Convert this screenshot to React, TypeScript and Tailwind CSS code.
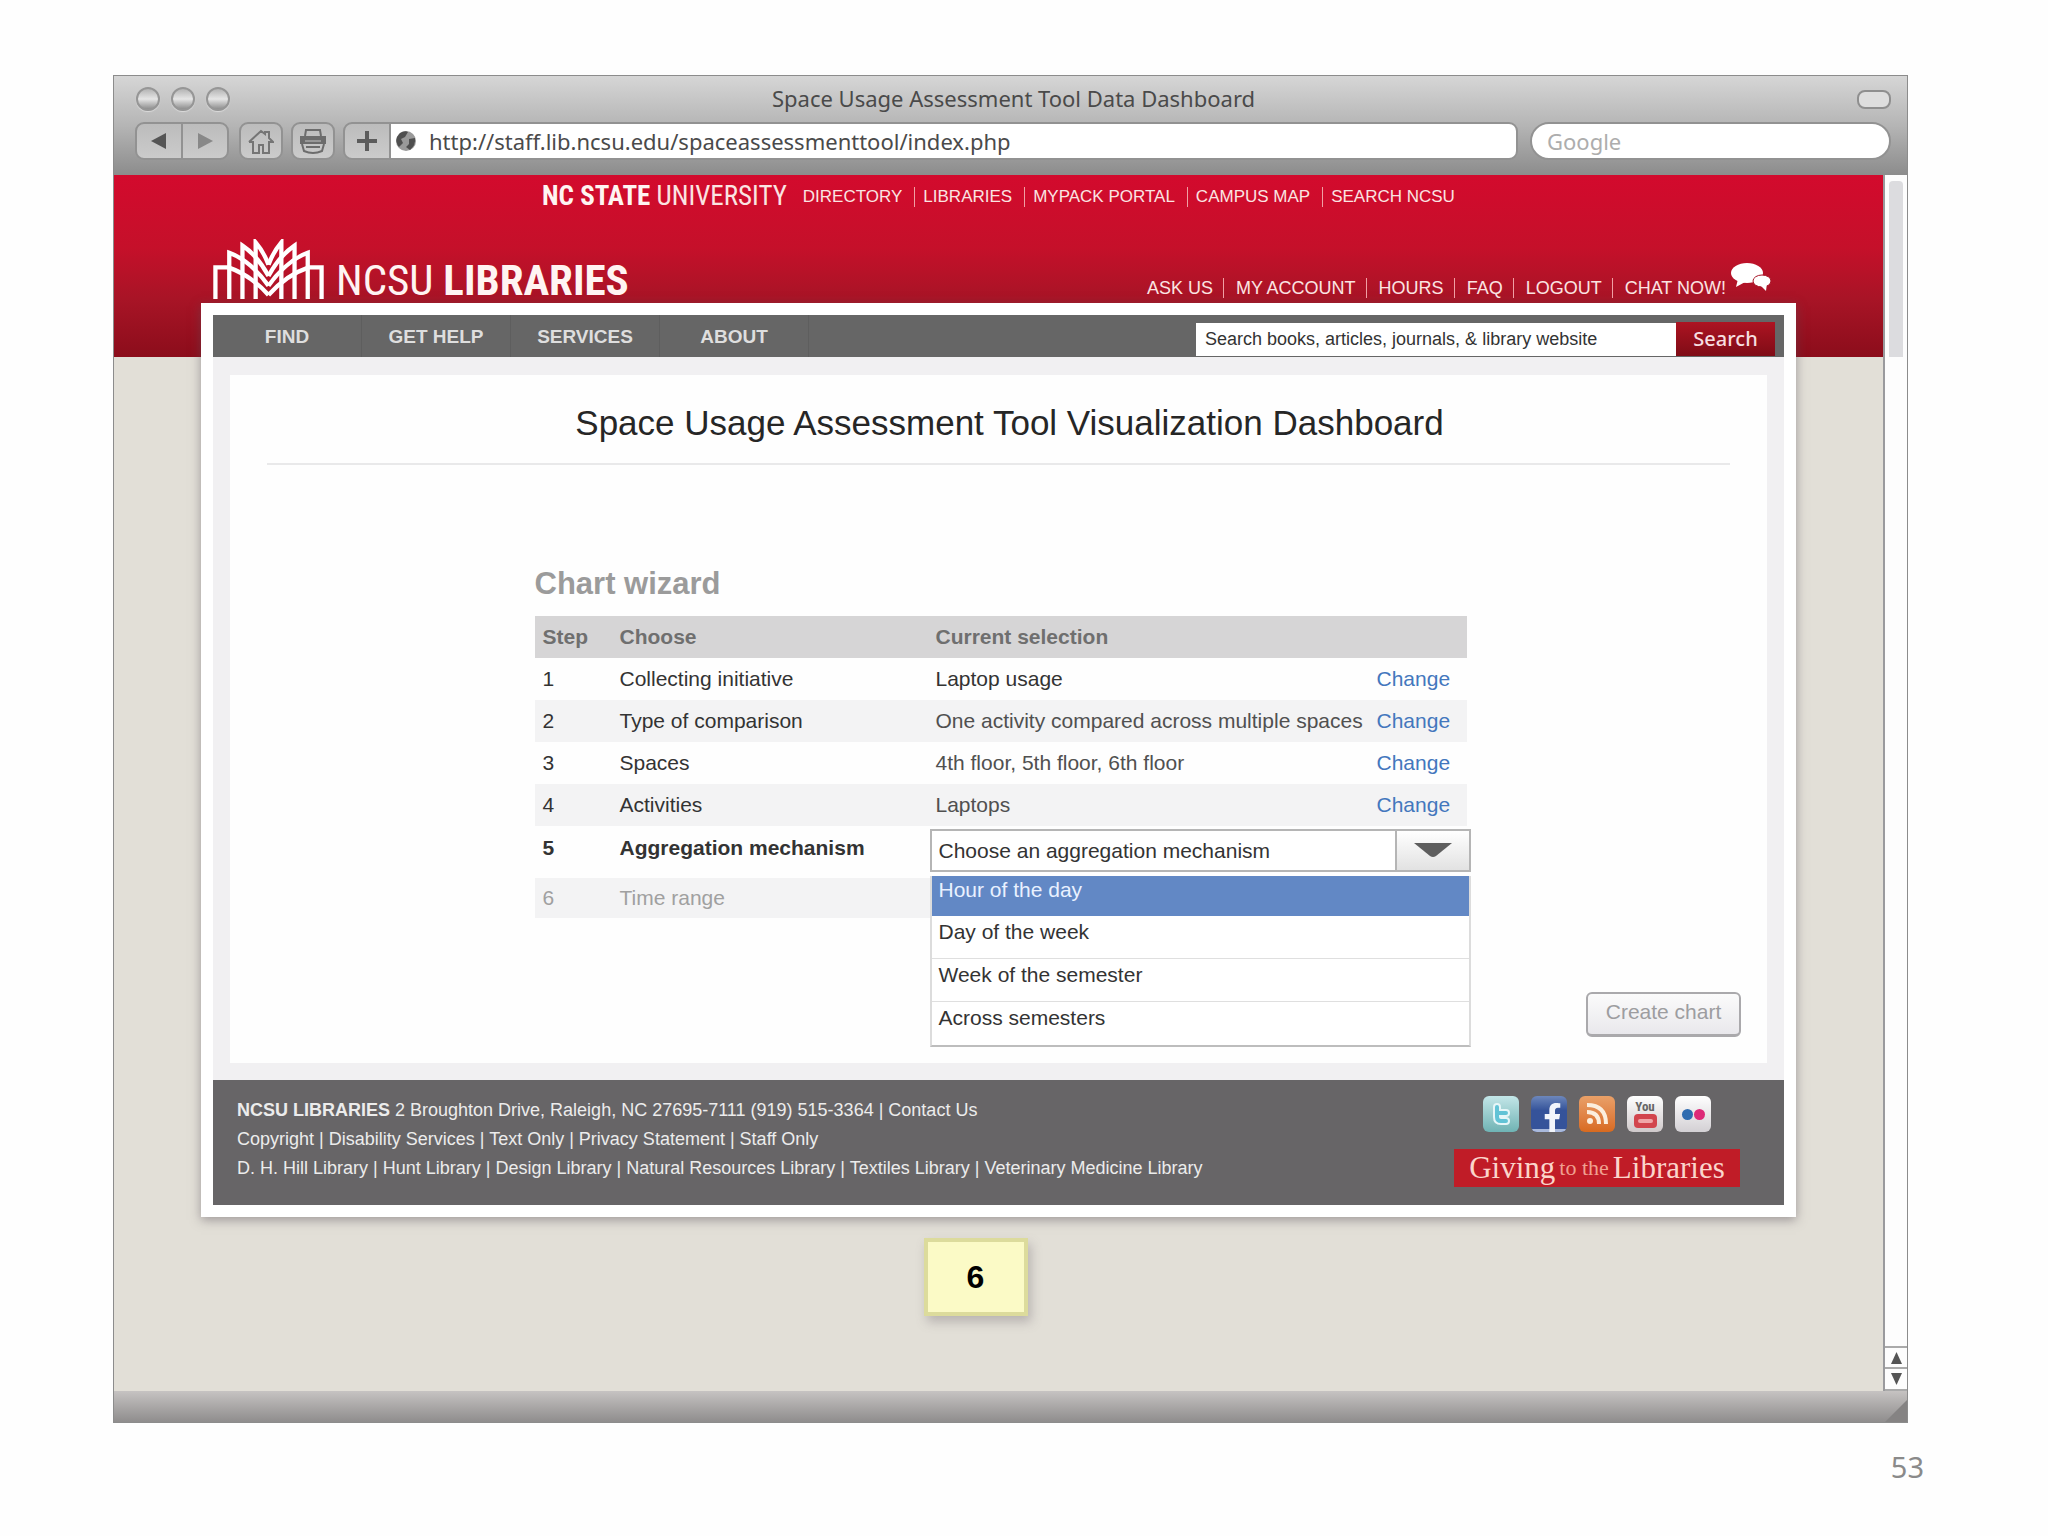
import type { ReactNode } from "react";
import { FaFacebookF } from "react-icons/fa";

const uiFont = "font-['Noto_Sans','DejaVu_Sans',sans-serif]";
const condensed = "font-['Roboto_Condensed','Roboto',sans-serif]";

const topLinks = ["DIRECTORY", "LIBRARIES", "MYPACK PORTAL", "CAMPUS MAP", "SEARCH NCSU"];
const accountLinks = ["ASK US", "MY ACCOUNT", "HOURS", "FAQ", "LOGOUT", "CHAT NOW!"];
const navItems = ["FIND", "GET HELP", "SERVICES", "ABOUT"];

const doneSteps = [
  { step: 1, choose: "Collecting initiative", current: "Laptop usage" },
  { step: 2, choose: "Type of comparison", current: "One activity compared across multiple spaces" },
  { step: 3, choose: "Spaces", current: "4th floor, 5th floor, 6th floor" },
  { step: 4, choose: "Activities", current: "Laptops" },
];

const aggregations = ["Hour of the day", "Day of the week", "Week of the semester", "Across semesters"];

const footerRows = [
  ["Copyright", "Disability Services", "Text Only", "Privacy Statement", "Staff Only"],
  [
    "D. H. Hill Library",
    "Hunt Library",
    "Design Library",
    "Natural Resources Library",
    "Textiles Library",
    "Veterinary Medicine Library",
  ],
];

function TrafficLight({ label }: { label: string }) {
  return (
    <button
      aria-label={label}
      className="size-6 rounded-full border-2 border-[#969696] bg-linear-to-b from-[#b4b4b4] via-[#e6e6e6] to-[#8f8f8f] shadow-[0_1px_1px_#dcdcdc]"
    />
  );
}

function ToolButton({ label, shape, children }: { label: string; shape: string; children: ReactNode }) {
  return (
    <button
      aria-label={label}
      className={`flex h-[38px] items-center justify-center border-2 border-[#929292] bg-linear-to-b from-[#bcbcbc] to-[#cbcbcb] ${shape}`}
    >
      {children}
    </button>
  );
}

function BrowserToolbar() {
  return (
    <div className={`flex h-[99px] flex-col bg-linear-to-b from-[#d6d6d6] via-[#b5b5b5] to-[#8c8c8c] ${uiFont}`}>
      <div className="flex h-[46px] items-center pr-4 pl-[22px]">
        <div className="flex flex-1 gap-[11px]">
          <TrafficLight label="Close" />
          <TrafficLight label="Minimize" />
          <TrafficLight label="Zoom" />
        </div>
        <h2 className="pb-0.5 text-[22px] leading-6 text-[#4a4a4a]">Space Usage Assessment Tool Data Dashboard</h2>
        <div className="flex flex-1 justify-end">
          <button
            aria-label="Toggle toolbar"
            className="h-[19px] w-[34px] rounded-[8px] border-2 border-[#8f8f8f] bg-[#dedede]"
          />
        </div>
      </div>
      <div className="flex pr-4 pl-[21px]">
        <div className="flex">
          <ToolButton label="Back" shape="w-[48px] rounded-l-[9px]">
            <svg className="size-4" viewBox="0 0 16 16" aria-hidden="true">
              <path d="M15 0V16L0 8Z" fill="#555" />
            </svg>
          </ToolButton>
          <ToolButton label="Forward" shape="-ml-0.5 w-[48px] rounded-r-[9px]">
            <svg className="size-4" viewBox="0 0 16 16" aria-hidden="true">
              <path d="M1 0V16L16 8Z" fill="#888" />
            </svg>
          </ToolButton>
        </div>
        <ToolButton label="Home" shape="ml-2.5 w-[44px] rounded-[9px]">
          <svg className="size-[26px]" viewBox="0 0 26 26" fill="none" stroke="#757575" strokeWidth="2" aria-hidden="true">
            <path d="M1 14L13 3L17 6V4H21V10L25 14H21V25H15V17H11V25H5V14H1" />
          </svg>
        </ToolButton>
        <ToolButton label="Print" shape="ml-2 w-[44px] rounded-[9px]">
          <svg className="size-[28px]" viewBox="0 0 28 28" fill="none" stroke="#6c6c6c" strokeWidth="2" aria-hidden="true">
            <path d="M6 9L7 3H21L22 9" />
            <path d="M2 10H26V16H2Z" fill="#6c6c6c" />
            <path d="M3 17L5 24Q14 28 23 24L25 17M7 20H21" />
            <path d="M6 14H22" stroke="#c4c4c4" strokeWidth="1" />
          </svg>
        </ToolButton>
        <ToolButton label="Add bookmark" shape="ml-2 w-[48px] rounded-l-[9px]">
          <svg className="size-[22px]" viewBox="0 0 22 22" aria-hidden="true">
            <path d="M11 1V21M1 11H21" stroke="#5c5c5c" strokeWidth="4" />
          </svg>
        </ToolButton>
        <label className="flex h-[38px] flex-1 items-center gap-3 rounded-r-[9px] border-y-2 border-r-2 border-[#929292] bg-white pl-1">
          <svg className="size-[22px]" viewBox="0 0 22 22" aria-hidden="true">
            <circle cx="11" cy="11" r="10" fill="#9a9a9a" />
            <path d="M5 3Q10 0 13 2L10 7L6 9L8 13L4 17Q0 12 2 7ZM14 9L20 8Q21 15 15 20L11 17L14 14Z" fill="#4f4f4f" />
          </svg>
          <input
            aria-label="Address"
            className="h-[34px] min-w-0 flex-1 bg-transparent text-[22px] leading-[34px] text-[#4a4a4a] outline-none"
            defaultValue="http://staff.lib.ncsu.edu/spaceassessmenttool/index.php"
          />
        </label>
        <input
          aria-label="Google search"
          placeholder="Google"
          className="ml-3 h-[38px] w-[361px] rounded-full border-2 border-[#929292] bg-white px-[15px] text-[22px] leading-7 outline-none placeholder:text-[#adadad]"
        />
      </div>
    </div>
  );
}

function LibraryMark() {
  return (
    <svg className="h-[60px] w-[111px]" viewBox="26 26 336 182" fill="none" stroke="#fff" strokeWidth="13" aria-hidden="true">
      <path d="M33 208V112H72Q140 135 194 196" />
      <path d="M75 208V68Q140 92 194 168" />
      <path d="M115 208V46Q160 76 194 138" />
      <path d="M155 208V36Q178 62 194 104" />
      <path d="M355 208V112H316Q248 135 194 196" />
      <path d="M313 208V68Q248 92 194 168" />
      <path d="M273 208V46Q228 76 194 138" />
      <path d="M233 208V36Q210 62 194 104" />
    </svg>
  );
}

function SiteHeader() {
  return (
    <header className="text-[#fbe4e2]">
      <div className="flex h-[42px] items-center justify-center">
        <a href="#university" className={`mr-4 text-[27px] leading-8 ${condensed}`}>
          <b className="text-[#fff4f2]">NC STATE</b> UNIVERSITY
        </a>
        <nav aria-label="University" className="flex pt-0.5 text-[17px] leading-5">
          {topLinks.map((text, i) => (
            <a
              key={text}
              href="#top"
              className={i === 0 ? "pr-3" : "border-l border-[#f0a0a4] pr-3 pl-2 last:pr-0"}
            >
              {text}
            </a>
          ))}
        </nav>
      </div>
      <div className="mx-[87px] flex h-[86px] items-end justify-between pr-[25px] pl-3">
        <a href="#home" className="flex items-end gap-3 pb-1">
          <LibraryMark />
          <span className={`text-[43px] leading-[38px] text-[#fff4f2] ${condensed}`}>
            NCSU <b>LIBRARIES</b>
          </span>
        </a>
        <div className="flex items-end gap-1">
          <nav aria-label="Account" className="flex pb-[5px] text-[18px] leading-5">
            {accountLinks.map((text, i) => (
              <a
                key={text}
                href="#account"
                className={i === 0 ? "pr-2.5" : "border-l border-[#f0a0a4] pr-2.5 pl-3 last:pr-0"}
              >
                {text}
              </a>
            ))}
          </nav>
          <svg className="mb-3 h-[28px] w-[41px]" viewBox="0 0 41 28" fill="#fff" aria-hidden="true">
            <ellipse cx="17" cy="10" rx="16" ry="10" />
            <path d="M8 16L6 24L17 18Z" />
            <ellipse cx="32" cy="18" rx="9" ry="6" stroke="#a81527" strokeWidth="1" />
            <path d="M30 22L36 28L37 20Z" />
          </svg>
        </div>
      </div>
    </header>
  );
}

function MainNav() {
  return (
    <div className="flex h-[42px] bg-[#666]">
      <nav aria-label="Main" className="flex">
        {navItems.map((item) => (
          <a
            key={item}
            href="#nav"
            className="flex w-[149px] items-center justify-center border-r border-[#5e5e5e] pt-0.5 text-[19px] leading-6 font-bold text-[#dedede]"
          >
            {item}
          </a>
        ))}
      </nav>
      <form className="ml-auto flex items-center pt-1.5 pr-[9px]">
        <input
          aria-label="Search the library"
          defaultValue="Search books, articles, journals, & library website"
          className="h-[33px] w-[480px] bg-white px-[9px] text-[18px] text-[#333] outline-none"
        />
        <button
          type="button"
          className={`h-[34px] w-[99px] bg-linear-to-b from-[#ad1422] to-[#7f0c16] text-[20px] leading-6 font-medium text-[#f7dfe0] ${uiFont}`}
        >
          Search
        </button>
      </form>
    </div>
  );
}

function AggregationSelect() {
  return (
    <div className="relative -mr-1">
      <div className="flex h-[43px] border-2 border-[#b5b5b5] bg-white">
        <select
          aria-label="Aggregation mechanism"
          defaultValue=""
          className="min-w-0 flex-1 appearance-none bg-transparent pl-[7px] outline-none"
        >
          <option value="">Choose an aggregation mechanism</option>
          {aggregations.map((name) => (
            <option key={name}>{name}</option>
          ))}
        </select>
        <span className="flex w-[74px] items-center justify-center border-l-2 border-[#b5b5b5] bg-linear-to-b from-white to-[#e2e2e2]">
          <svg className="h-[15px] w-[38px]" viewBox="0 0 38 15" aria-hidden="true">
            <path d="M0 0H38L22 13Q19 15 16 13Z" fill="#5e5e5e" />
          </svg>
        </span>
      </div>
      <ul
        role="listbox"
        aria-label="Aggregation mechanisms"
        className="absolute top-[47px] right-0 left-0 z-10 border-x-2 border-b-2 border-x-[#dcdcdc] border-b-[#bdbdbd] bg-white"
      >
        {aggregations.map((name, i) => (
          <li
            key={name}
            role="option"
            aria-selected={i === 0}
            className={
              i === 0
                ? "h-10 bg-[#6288c5] pl-[7px] leading-7 text-[#e9f1ff]"
                : "h-[43px] border-b border-[#dfdfdf] pl-[7px] leading-8 last:border-b-0"
            }
          >
            {name}
          </li>
        ))}
      </ul>
    </div>
  );
}

function ChartWizard() {
  return (
    <section className="mx-auto w-full max-w-[936px] pl-1">
      <h2 className="text-[31px] leading-10 font-bold text-[#9b9b9b]">Chart wizard</h2>
      <table className="mt-3 w-full table-fixed border-collapse text-left text-[21px] leading-7 text-[#333]">
        <colgroup>
          <col className="w-[77px]" />
          <col className="w-[316px]" />
          <col />
          <col className="w-[98px]" />
        </colgroup>
        <thead>
          <tr className="h-[42px] bg-[#d6d5d6] text-[#6f6f6f]">
            <th className="pl-2">Step</th>
            <th className="px-2">Choose</th>
            <th className="px-2" colSpan={2}>
              Current selection
            </th>
          </tr>
        </thead>
        <tbody>
          {doneSteps.map((row) => (
            <tr key={row.step} className="h-[42px] even:bg-[#f3f3f4]">
              <td className="pl-2">{row.step}</td>
              <td className="px-2">{row.choose}</td>
              <td className={row.step === 1 ? "pl-2 whitespace-nowrap" : "pl-2 whitespace-nowrap text-[#505050]"}>
                {row.current}
              </td>
              <td className="px-2">
                <a href="#change" className="text-[#4377bd]">
                  Change
                </a>
              </td>
            </tr>
          ))}
          <tr className="h-[52px] align-top">
            <td className="pt-2 pl-2 font-bold">5</td>
            <td className="px-2 pt-2 font-bold">Aggregation mechanism</td>
            <td className="pt-[3px] pl-0.5" colSpan={2}>
              <AggregationSelect />
            </td>
          </tr>
          <tr className="h-10 bg-[#f3f3f4] text-[#a0a0a0]">
            <td className="pl-2">6</td>
            <td className="px-2">Time range</td>
            <td colSpan={2} />
          </tr>
        </tbody>
      </table>
    </section>
  );
}

function SocialTile({ label, tone, children }: { label: string; tone: string; children: ReactNode }) {
  return (
    <a
      href="#social"
      aria-label={label}
      className={`flex size-9 items-center justify-center overflow-hidden rounded-[6px] bg-linear-to-b ${tone}`}
    >
      {children}
    </a>
  );
}

function SocialLinks() {
  return (
    <div className="flex gap-3 pl-[29px]">
      <SocialTile label="Twitter" tone="from-[#c3e6e8] to-[#6fb3b4]">
        <svg className="size-9" viewBox="0 0 36 36" fill="none" strokeLinecap="round" aria-hidden="true">
          <path d="M14 11V21Q14 25 18 25H23M14 17H23" stroke="#e6f6f8" strokeWidth="8" />
          <path d="M14 11V21Q14 25 18 25H23M14 17H23" stroke="#62c3d6" strokeWidth="4" />
        </svg>
      </SocialTile>
      <SocialTile label="Facebook" tone="from-[#6d87bb] via-[#35539a] via-40% to-[#35539a]">
        <span className="flex size-9 items-end justify-end border-b-[3px] border-[#a9b9dc] pr-[5px]">
          <FaFacebookF className="-mb-[3px] h-[29px] w-[19px] text-[#f2f5fb]" />
        </span>
      </SocialTile>
      <SocialTile label="RSS" tone="from-[#e9a068] to-[#d86a1f]">
        <svg className="size-9" viewBox="0 0 36 36" fill="none" stroke="#fbeedd" strokeWidth="4" aria-hidden="true">
          <circle cx="11" cy="25" r="3" fill="#fbeedd" stroke="none" />
          <path d="M8 16Q20 16 20 28M8 9Q27 9 27 28" />
        </svg>
      </SocialTile>
      <SocialTile label="YouTube" tone="from-white to-[#cfc9cb]">
        <span className="flex flex-col items-center">
          <span className={`text-[13px] leading-[11px] font-bold text-[#666] ${condensed}`}>You</span>
          <span className="mt-0.5 flex h-[14px] w-[23px] items-center justify-center rounded-[4px] bg-[#d2454d]">
            <span className="h-1 w-[15px] rounded-[2px] bg-[#f0a6a8]" />
          </span>
        </span>
      </SocialTile>
      <SocialTile label="Flickr" tone="from-white to-[#d3d0d4]">
        <span className="flex gap-px">
          <span className="size-[11px] rounded-full bg-[#2f6cb0]" />
          <span className="size-[11px] rounded-full bg-[#dd2a78]" />
        </span>
      </SocialTile>
    </div>
  );
}

function SiteFooter() {
  return (
    <footer className="flex h-[125px] items-start justify-between bg-[#676567] pr-[44px] pl-6 text-[#ececec]">
      <div className="pt-4 text-[18px] leading-[29px]">
        <p>
          <b>NCSU LIBRARIES</b> 2 Broughton Drive, Raleigh, NC 27695-7111 (919) 515-3364 |{" "}
          <a href="#contact">Contact Us</a>
        </p>
        {footerRows.map((row) => (
          <p key={row[0]}>
            {row.map((text, i) => (
              <span key={text}>
                {i > 0 && " | "}
                <a href="#footer">{text}</a>
              </span>
            ))}
          </p>
        ))}
      </div>
      <div className="flex flex-col gap-[17px] pt-4">
        <SocialLinks />
        <a
          href="#giving"
          className="flex h-[38px] w-[286px] items-center justify-center gap-1 bg-[#c01c27] font-['Liberation_Serif',serif] text-[31px] leading-8 text-[#fbd5cb]"
        >
          Giving <span className="text-[22px] text-[#f0a090]">to the</span> Libraries
        </a>
      </div>
    </footer>
  );
}

function PageScrollbar() {
  return (
    <div aria-hidden="true" className="flex w-6 flex-col border-l-2 border-[#9a9a9d] bg-[#fdfdfd] pt-1.5">
      <div className="mx-1 h-[176px] rounded-t-[4px] bg-[#dcdcdf]" />
      <div className="mt-auto flex h-[21px] items-center justify-center border-t-2 border-[#aaa]">
        <svg className="h-3 w-[11px]" viewBox="0 0 11 12">
          <path d="M5.5 0L11 12H0Z" fill="#555" />
        </svg>
      </div>
      <div className="flex h-[24px] items-center justify-center border-y-2 border-[#aaa]">
        <svg className="h-3 w-[11px]" viewBox="0 0 11 12">
          <path d="M5.5 12L11 0H0Z" fill="#555" />
        </svg>
      </div>
    </div>
  );
}

export default function App() {
  return (
    <div className="min-h-screen bg-[#fefefe] pt-[75px] pr-[124px] pl-[113px] font-['Liberation_Sans',Arial,sans-serif]">
      <div className="mr-4 border border-[#8c8c8c]">
        <BrowserToolbar />
        <div className="flex">
          <div className="flex-1 bg-[#e2dfd7] bg-[linear-gradient(to_bottom,#d30a2d_0%,#c5102a_40%,#a81426_68%,#8b0d1b_100%)] bg-[length:100%_182px] bg-no-repeat pb-[75px]">
            <SiteHeader />
            <div className="mx-[87px] bg-white p-3 shadow-[0_3px_10px_rgba(90,80,90,0.5)]">
              <MainNav />
              <div className="bg-[#f1f0f2] px-[17px] pt-[18px] pb-[17px]">
                <main className="bg-[#fefefe] px-[23px] pt-7 pb-[26px]">
                  <h1 className="ml-[22px] text-center text-[35px] leading-10 text-[#262626]">
                    Space Usage Assessment Tool Visualization Dashboard
                  </h1>
                  <hr className="mt-5 mb-[99px] ml-3.5 mr-3.5 border-t-2 border-[#e9e9ea]" />
                  <ChartWizard />
                  <div className="mt-[74px] flex justify-end pr-[3px]">
                    <button
                      type="button"
                      disabled
                      className="h-[45px] w-[155px] rounded-[6px] border-2 border-b-[3px] border-[#aaa9ac] bg-linear-to-b from-[#fbfbfb] to-[#e9e8ec] pb-1 text-[21px] leading-6 text-[#9d9da0]"
                    >
                      Create chart
                    </button>
                  </div>
                </main>
              </div>
              <SiteFooter />
            </div>
            <div className="mt-[21px] flex justify-center pr-[46px]">
              <div className="flex h-[78px] w-[104px] items-center justify-center border-4 border-[#dcdb9c] bg-[#fbfac6] text-[32px] leading-9 font-bold text-black shadow-[3px_6px_10px_rgba(110,100,110,0.35)]">
                6
              </div>
            </div>
          </div>
          <PageScrollbar />
        </div>
        <div className="flex h-[31px] items-end justify-end bg-linear-to-b from-[#c6c3c2] to-[#8f8d8d]">
          <svg className="size-[22px]" viewBox="0 0 22 22" aria-hidden="true">
            <path d="M22 0V22H0Z" fill="#858383" />
          </svg>
        </div>
      </div>
      <p className="mt-6 text-right font-['Noto_Sans',sans-serif] text-[29px] leading-10 text-[#8a8a8a]">53</p>
    </div>
  );
}
